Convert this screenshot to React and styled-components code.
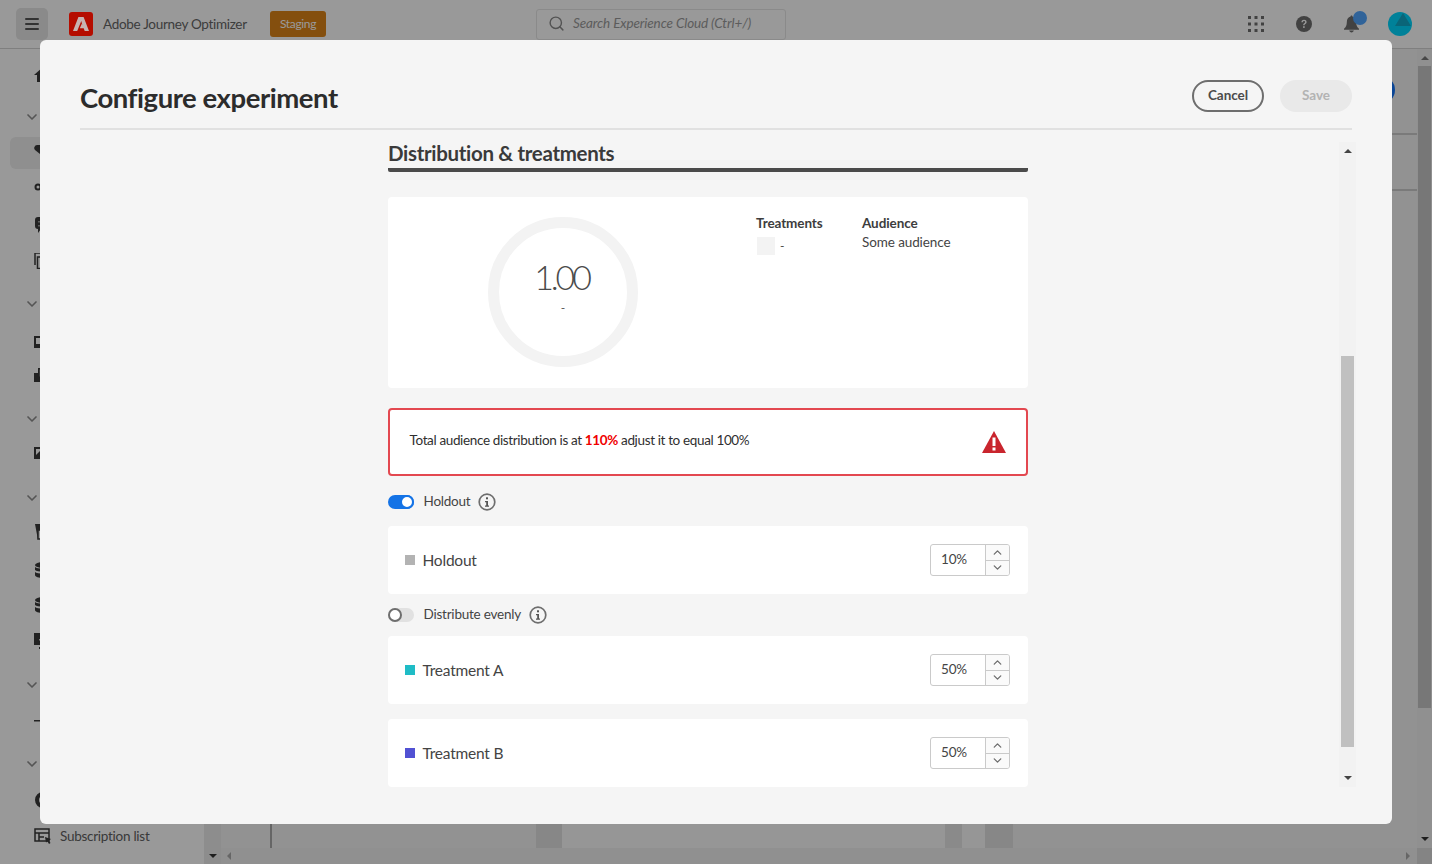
import React from "react";
import styled, { createGlobalStyle } from "styled-components";
import { ChevronDown, ChevronUp, Search } from "lucide-react";

const FONT = `"Lato", "Noto Sans", sans-serif`;

const Global = createGlobalStyle`
  html, body { margin: 0; height: 100%; overflow: hidden; background: #fff; }
  body { font-family: ${FONT}; color: #2c2c2c; }
  * { box-sizing: border-box; }
`;

const Page = styled.div`
  width: 1432px; height: 864px; display: flex; flex-direction: column; overflow: hidden; background: #fff;
`;
const Header = styled.header`
  height: 49px; flex: none; display: flex; align-items: center; border-bottom: 1px solid #d4d4d4; padding-left: 16px;
`;
const MenuBtn = styled.div`
  width: 32px; height: 32px; border-radius: 5px; background: #e6e6e6; display: flex; align-items: center; justify-content: center; margin-right: 21px;
`;
const LogoWrap = styled.div`
  position: relative; z-index: 2; width: 24px; height: 24px; flex: none;
`;
const ProductName = styled.span`
  width: 167px; flex: none; font-size: 13.5px; letter-spacing: -0.3px; color: #666; margin-left: 10px; padding-bottom: 1px; white-space: nowrap;
`;
const Badge = styled.span`
  width: 56px; height: 26px; flex: none; border-radius: 3px; background: #dc8418; color: #fff; font-size: 12px; letter-spacing: -0.35px; padding-bottom: 2px; display: flex; align-items: center; justify-content: center;
`;
const SearchBox = styled.div`
  width: 250px; height: 31px; flex: none; margin-left: 210px; border: 1px solid #e6e6e6; border-radius: 3px; display: flex; align-items: center; gap: 8px; padding-left: 11px; padding-bottom: 2px;
  font-size: 13.5px; letter-spacing: -0.12px; font-style: italic; color: #9a9a9a; white-space: nowrap;
`;
const HeaderTools = styled.div`
  margin-left: auto; display: flex; align-items: center; gap: 31px; padding-right: 20px;
`;
const ToolWrap = styled.div`
  position: relative; width: 17px; height: 24px; display: flex; align-items: center; justify-content: center;
`;
const AvatarWrap = styled.div`
  margin-left: -3px; width: 24px; height: 24px;
`;
const Dot = styled.span`
  position: absolute; top: -1px; right: -7px; width: 14px; height: 14px; border-radius: 50%; background: #50a5ff;
`;

const Body = styled.div`
  flex: 1; display: flex; min-height: 0;
`;
const Sidebar = styled.nav`
  width: 204px; flex: none; padding-top: 10px; display: flex; flex-direction: column; background: #fff;
`;
const SideRow = styled.div`
  height: 32px; flex: none; display: flex; align-items: center; margin-top: ${(p) => p.$mt}px;
  padding-left: ${(p) => (p.$chevron ? 24 : 34)}px; padding-top: ${(p) => (p.$chevron ? 2 : 0)}px; color: ${(p) => (p.$chevron ? "#8e8e8e" : "#3a3a3a")};
  ${(p) => p.$active && `margin-left: 10px; padding-left: 24px; border-radius: 6px 0 0 6px; background: #eeeeee;`}
`;
const SideLabel = styled.span`
  font-size: 13.5px; letter-spacing: -0.27px; margin-left: 8px; color: #616161;
`;
const SideScroll = styled.div`
  width: 17px; flex: none; background: #ececec; display: flex; flex-direction: column; justify-content: flex-end; align-items: center; padding-bottom: 6px;
`;
const Content = styled.main`
  flex: 1; min-width: 0; display: flex; flex-direction: column; background: #f4f4f4;
`;
const ContentTop = styled.div`
  flex: 1; min-height: 0; display: flex;
`;
const Pane = styled.div`
  flex: 1; min-width: 0; display: flex; flex-direction: column; position: relative;
`;
const PaneLine = styled.div`
  height: 2px; background: #ccc; margin-top: ${(p) => p.$mt}px;
`;
const BlueDot = styled.span`
  position: absolute; right: 22px; top: 27px; width: 28px; height: 28px; border-radius: 50%; background: #1273f8;
`;
const BottomStrip = styled.div`
  margin-top: auto; height: 24px; display: flex; padding-left: 49px;
`;
const StripBlock = styled.div`
  width: ${(p) => p.$w}px; height: 100%; margin-left: ${(p) => p.$ml || 0}px; background: ${(p) => p.$bg};
`;
const VScroll = styled.div`
  width: 15px; flex: none; background: #f0f0f0; display: flex; flex-direction: column; align-items: center; position: relative;
`;
const VThumb = styled.div`
  width: 13px; height: 642px; margin-top: 17px; background: #c6c6c6;
`;
const HScroll = styled.div`
  height: 16px; flex: none; background: #f0f0f0; display: flex; align-items: center; padding-left: 6px;
`;
const Corner = styled.div`
  width: 15px; height: 16px; background: #dcdcdc; margin-left: 7px;
`;
const Arrow = styled.span`
  display: block; width: 0; height: 0; flex: none;
  ${(p) => p.$dir === "up" && `border-left: 4px solid transparent; border-right: 4px solid transparent; border-bottom: 4px solid ${p.$c};`}
  ${(p) => p.$dir === "down" && `border-left: 4px solid transparent; border-right: 4px solid transparent; border-top: 4px solid ${p.$c};`}
  ${(p) => p.$dir === "left" && `border-top: 4px solid transparent; border-bottom: 4px solid transparent; border-right: 4px solid ${p.$c};`}
  ${(p) => p.$dir === "right" && `margin-left: auto; border-top: 4px solid transparent; border-bottom: 4px solid transparent; border-left: 4px solid ${p.$c};`}
`;
const ArrowTop = styled.div`
  position: absolute; top: 7px;
`;
const ArrowBottom = styled.div`
  position: absolute; bottom: 7px;
`;

const Overlay = styled.div`
  position: fixed; inset: 0; z-index: 1; background: rgba(0, 0, 0, 0.4); display: flex; align-items: center; justify-content: center;
`;
const Dialog = styled.div`
  width: 1352px; height: 784px; background: #f5f5f5; border-radius: 6px; padding: 40px 40px 36px; display: flex; flex-direction: column;
`;
const DialogHead = styled.div`
  height: 50px; flex: none; display: flex; align-items: flex-start; justify-content: space-between; border-bottom: 2px solid #e1e1e1;
`;
const DialogTitle = styled.h1`
  margin: 0; font-size: 27.5px; letter-spacing: -0.45px; font-weight: 700; line-height: 36px; color: #2c2c2c;
`;
const Actions = styled.div`
  display: flex; gap: 16px;
`;
const PillBtn = styled.div`
  width: 72px; height: 32px; border-radius: 16px; display: flex; align-items: center; justify-content: center; padding-bottom: 3px;
  font-size: 13.5px; letter-spacing: -0.05px; font-weight: 700;
  color: ${(p) => (p.$disabled ? "#b3b3b3" : "#4b4b4b")};
  background: ${(p) => (p.$disabled ? "#e9e9e9" : "transparent")};
  border: ${(p) => (p.$disabled ? "none" : "2px solid #6e6e6e")};
`;
const Scroller = styled.div`
  flex: 1; min-height: 0; display: flex; position: relative; padding-top: 10px;
`;
const Column = styled.div`
  width: 640px; margin-left: 308px; display: flex; flex-direction: column;
`;
const SectionTitle = styled.h2`
  margin: 0; flex: none; font-size: 20.5px; letter-spacing: -0.32px; font-weight: 700; line-height: 26px; color: #3a3a3a;
  border-bottom: 4px solid #4b4b4b; border-radius: 2px; height: 32px;
`;
const SummaryCard = styled.section`
  height: 191px; margin-top: 25px; background: #fff; border-radius: 4px; display: flex; padding: 17px 0 0 100px; flex: none;
`;
const Ring = styled.div`
  width: 150px; height: 150px; margin-top: 3px; border-radius: 50%; border: 11px solid #f3f3f3; display: flex; flex-direction: column; align-items: center; flex: none;
`;
const RingValue = styled.div`
  font-size: 34px; letter-spacing: -3.1px; font-weight: 300; line-height: 38px; margin-top: 30px; margin-right: 3px; color: #4b4b4b;
`;
const RingSub = styled.div`
  font-size: 12px; line-height: 16px; margin-top: 4px; color: #555;
`;
const Legend = styled.div`
  margin-left: 118px; display: flex;
`;
const LegendCol = styled.div`
  width: ${(p) => p.$w}px; display: flex; flex-direction: column; font-size: 13.5px; letter-spacing: -0.1px; line-height: 18px; color: #444;
`;
const LegendHead = styled.div`
  font-weight: 700; color: #3d3d3d;
`;
const LegendItem = styled.div`
  display: flex; align-items: center; gap: 5px; margin-top: 5px; margin-left: 1px; font-size: 12px;
`;
const LegendValue = styled.div`
  margin-top: 1px;
`;
const Swatch = styled.span`
  width: ${(p) => p.$s}px; height: ${(p) => p.$s}px; flex: none; background: ${(p) => p.$c};
`;
const ErrorBox = styled.div`
  height: 68px; margin-top: 20px; flex: none; background: #fff; border: 2px solid #e34850; border-radius: 4px; display: flex; align-items: center; justify-content: space-between;
  padding: 0 20px 0 19.5px; font-size: 13.5px; letter-spacing: -0.36px; color: #2f2f2f;
`;
const ErrorText = styled.span`
  margin-top: -4px;
`;
const Hot = styled.b`
  color: #f00000; font-weight: 700;
`;
const ToggleRow = styled.div`
  height: 20px; margin-top: ${(p) => p.$mt}px; flex: none; display: flex; align-items: center; font-size: 13.5px; letter-spacing: -0.22px; color: #444;
`;
const ToggleText = styled.span`
  margin-bottom: 2px;
`;
const Toggle = styled.span`
  width: 26px; height: 14px; border-radius: 7px; position: relative; flex: none; margin-right: 9.5px;
  background: ${(p) => (p.$on ? "#1473e6" : "#e1e1e1")};
  &::after {
    content: ""; box-sizing: border-box; position: absolute; top: 0; width: 14px; height: 14px; border-radius: 50%; background: #fff;
    border: 2px solid ${(p) => (p.$on ? "#1473e6" : "#6e6e6e")};
    ${(p) => (p.$on ? "right: 0;" : "left: 0;")}
  }
`;
const RowCard = styled.div`
  height: 68px; margin-top: ${(p) => p.$mt}px; flex: none; background: #fff; border-radius: 4px; display: flex; align-items: center; padding: 0 18px 0 17px;
`;
const RowLabel = styled.span`
  font-size: 15.5px; letter-spacing: -0.22px; margin-left: 7.5px; color: #444;
`;
const Stepper = styled.div`
  margin-left: auto; width: 80px; height: 32px; border: 1px solid #cacaca; border-radius: 3px; display: flex; overflow: hidden; background: #fff;
`;
const StepValue = styled.div`
  flex: 1; font-size: 13.5px; letter-spacing: -0.2px; padding-left: 10px; line-height: 28px; color: #444;
`;
const StepBtns = styled.div`
  width: 24px; border-left: 1px solid #cacaca; display: flex; flex-direction: column; background: #fafafa;
`;
const StepBtn = styled.div`
  flex: 1; display: flex; align-items: center; justify-content: center; color: #6e6e6e;
  & + & { border-top: 1px solid #cacaca; }
`;
const DScroll = styled.div`
  position: absolute; right: -4px; top: 12px; width: 17px; height: 645px; background: #f2f2f2; display: flex; flex-direction: column; align-items: center;
`;
const DThumb = styled.div`
  position: absolute; left: 2px; right: 2px; top: 214px; height: 391px; background: #c0c0c0;
`;

const LogoMark = () => (
  <svg width="24" height="24" viewBox="0 0 24 24" style={{ display: "block" }}>
    <rect width="24" height="24" rx="3" fill="#b50d00" />
    <path d="M9.4 5h5.2L20 19h-4.3l-1-2.8h-3.9l2-4.4 1 2.9h-.1L12.3 9 8.200 19H4z" fill="#c7b3b1" />
  </svg>
);
const Hamburger = () => (
  <svg width="14" height="12" viewBox="0 0 14 12" fill="#555">
    <rect width="14" height="2" rx="1" /><rect y="5" width="14" height="2" rx="1" /><rect y="10" width="14" height="2" rx="1" />
  </svg>
);
const Apps = () => (
  <svg width="16" height="16" viewBox="0 0 16 16" fill="#6f6f6f">
    {[0, 6.5, 13].flatMap((x) => [0, 6.5, 13].map((y) => <rect key={`${x}-${y}`} x={x} y={y} width="3" height="3" />))}
  </svg>
);
const Help = () => (
  <svg width="16" height="16" viewBox="0 0 16 16">
    <circle cx="8" cy="8" r="8" fill="#6f6f6f" />
    <path d="M5.400 6.200C5.500 4.600 6.600 3.800 8 3.800c1.500 0 2.600.9 2.600 2.200 0 1.100-.6 1.600-1.300 2.100-.5.4-.7.6-.7 1.200H7.200c0-1 .3-1.500 1-2 .6-.4.9-.7.9-1.200 0-.6-.5-1-1.100-1-.7 0-1.100.4-1.200 1.100z" fill="#fff" />
    <rect x="7.100" y="10.200" width="1.600" height="1.700" fill="#fff" />
  </svg>
);
const Bell = () => (
  <svg width="15" height="18" viewBox="0 0 16 18" fill="#6f6f6f">
    <path d="M8 0c.7 0 1 .5 1 1.100C11.600 1.700 13 4 13 7c0 3 .9 5 3 7v1H0v-1c2.100-2 3-4 3-7 0-3 1.400-5.300 4-5.900C7 .5 7.300 0 8 0z" />
    <path d="M5.500 16h5c-.4 1.200-1.300 2-2.500 2s-2.100-.8-2.500-2z" />
  </svg>
);
const Avatar = () => (
  <svg width="24" height="24" viewBox="0 0 24 24" style={{ display: "block" }}>
    <circle cx="12" cy="12" r="12" fill="#00d8ff" />
    <path d="M15 1l8 13H7z" fill="#11a8c8" />
  </svg>
);
const WarningIcon = () => (
  <svg width="24" height="22" viewBox="0 0 24 22">
    <path d="M12 0L24 22H0z" fill="#c9252d" />
    <rect x="10.500" y="6.500" width="3" height="8.500" fill="#fff" />
    <rect x="10.500" y="16.500" width="3" height="3" fill="#fff" />
  </svg>
);
const InfoMark = () => (
  <svg width="18" height="18" viewBox="0 0 18 18" style={{ marginLeft: 8, flex: "none" }}>
    <circle cx="9" cy="9" r="7.800" fill="none" stroke="#6e6e6e" strokeWidth="1.700" />
    <rect x="8" y="4.300" width="2" height="2" fill="#555" />
    <path d="M7 8h3v4.500h1v1.200H7v-1.200h1.200V9.200H7z" fill="#555" />
  </svg>
);

const Glyph = ({ h = 18, children }) => (
  <svg width="18" height={h} viewBox={`0 0 18 ${h}`} fill="#3a3a3a" style={{ display: "block", flex: "none" }}>{children}</svg>
);
const HomeIcon = () => <Glyph><path d="M9 1l9 8h-3v7H3V9H0z" /></Glyph>;
const FunnelIcon = () => <Glyph h={16}><path d="M3 0h12a3 3 0 0 1 3 3v1l-5 5v7l-7-2V9L1 5a3 3 0 0 1 2-5z" /></Glyph>;
const RingIcon = () => <Glyph><circle cx="4" cy="9" r="2.500" fill="none" stroke="#3a3a3a" strokeWidth="2" /></Glyph>;
const ChatIcon = () => (
  <Glyph h={16}>
    <path d="M4 0h14v12H7l-3 4v-4a3 3 0 0 1-3-3V3a3 3 0 0 1 3-3z" />
    <path d="M4 4h12v1.500H4zM4 8h12v1.500H4z" fill="#999" />
  </Glyph>
);
const CopyIcon = () => (
  <Glyph h={16}>
    <path d="M1 12V0h13" fill="none" stroke="#3a3a3a" strokeWidth="1.500" />
    <rect x="3.500" y="4" width="14" height="11.500" fill="none" stroke="#3a3a3a" strokeWidth="1.500" />
  </Glyph>
);
const PicIcon = () => (
  <Glyph h={12}>
    <rect x="1" y="1" width="16" height="10" fill="none" stroke="#3a3a3a" strokeWidth="2" />
    <path d="M1 11V8h7l3-3 6 6z" />
  </Glyph>
);
const ExportIcon = () => (
  <Glyph h={14}>
    <path d="M0 5h4v-5h14v10H8v4H0z" />
    <rect x="5.500" y="1.500" width="10" height="7" fill="#999" />
  </Glyph>
);
const PicFillIcon = () => (
  <Glyph h={12}>
    <rect x="1" y="1" width="16" height="10" fill="none" stroke="#3a3a3a" strokeWidth="2" />
    <path d="M1 11V9l5-5 7 7z" />
  </Glyph>
);
const TreeIcon = () => (
  <Glyph h={16}>
    <path d="M1 0h8v6H4v10" fill="#3a3a3a" />
    <rect x="4" y="6" width="12" height="9" fill="none" stroke="#3a3a3a" strokeWidth="1.500" />
  </Glyph>
);
const DbIcon = () => (
  <Glyph h={16}>
    <ellipse cx="9" cy="3" rx="8" ry="3" />
    <path d="M1 5c2 2 14 2 16 0v3c-2 2-14 2-16 0zM1 10c2 2 14 2 16 0v3c0 2-4 3-8 3s-8-1-8-3z" />
  </Glyph>
);
const BoxIcon = () => (
  <Glyph h={16}>
    <path d="M0 0h14v12H0z" />
    <path d="M5 6h8v1.500H5z" fill="#ddd" />
    <path d="M5 14h3v2H5z" />
  </Glyph>
);
const DashIcon = () => (
  <Glyph><path d="M0 8h18v1.500H0z" /><path d="M6 1h1v5H6zM6 11h1v5H6z" fill="#ccc" /></Glyph>
);
const ArcIcon = () => (
  <Glyph h={16}><path d="M9 0a8 8 0 1 0 0 16v-4a4 4 0 1 1 0-8z" /></Glyph>
);
const ListIcon = () => (
  <svg width="18" height="16" viewBox="0 0 18 16" fill="none" stroke="#3a3a3a" strokeWidth="1.500" style={{ flex: "none" }}>
    <rect x="1" y="1" width="14" height="12" />
    <path d="M1 5h14M5 5v8M5 9h5" />
    <path d="M11 9l6 2-2 1.500 1.500 2.500-1.500 1-1.500-2.500-1.500 1z" fill="#3a3a3a" stroke="none" />
  </svg>
);

const sideRows = [
  { mt: 0, icon: <HomeIcon /> },
  { mt: 9, chevron: true },
  { mt: 5, active: true, icon: <FunnelIcon /> },
  { mt: 2, icon: <RingIcon /> },
  { mt: 6, icon: <ChatIcon /> },
  { mt: 4, icon: <CopyIcon /> },
  { mt: 10, chevron: true },
  { mt: 7, icon: <PicIcon /> },
  { mt: 1, icon: <ExportIcon /> },
  { mt: 11, chevron: true },
  { mt: 3, icon: <PicFillIcon /> },
  { mt: 12, chevron: true },
  { mt: 3, icon: <TreeIcon /> },
  { mt: 6, icon: <DbIcon /> },
  { mt: 3, icon: <DbIcon /> },
  { mt: 4, icon: <BoxIcon /> },
  { mt: 11, chevron: true },
  { mt: 5, icon: <DashIcon /> },
  { mt: 10, chevron: true },
  { mt: 5, icon: <ArcIcon /> },
  { mt: 4, icon: <ListIcon />, label: "Subscription list" },
];

const StepperField = ({ value }) => (
  <Stepper>
    <StepValue>{value}</StepValue>
    <StepBtns>
      <StepBtn><ChevronUp size={13} strokeWidth={2.5} /></StepBtn>
      <StepBtn><ChevronDown size={13} strokeWidth={2.5} /></StepBtn>
    </StepBtns>
  </Stepper>
);

export default function App() {
  return (
    <Page>
      <Global />
      <Header>
        <MenuBtn><Hamburger /></MenuBtn>
        <LogoWrap><LogoMark /></LogoWrap>
        <ProductName>Adobe Journey Optimizer</ProductName>
        <Badge>Staging</Badge>
        <SearchBox><Search size={17} color="#8a8a8a" />Search Experience Cloud (Ctrl+/)</SearchBox>
        <HeaderTools>
          <ToolWrap><Apps /></ToolWrap>
          <ToolWrap><Help /></ToolWrap>
          <ToolWrap><Bell /><Dot /></ToolWrap>
          <AvatarWrap><Avatar /></AvatarWrap>
        </HeaderTools>
      </Header>
      <Body>
        <Sidebar>
          {sideRows.map((r, i) => (
            <SideRow key={i} $mt={r.mt} $chevron={r.chevron} $active={r.active}>
              {r.chevron ? <ChevronDown size={16} strokeWidth={2.5} /> : r.icon}
              {r.label && <SideLabel>{r.label}</SideLabel>}
            </SideRow>
          ))}
        </Sidebar>
        <SideScroll><Arrow $dir="down" $c="#333" /></SideScroll>
        <Content>
          <ContentTop>
            <Pane>
              <BlueDot />
              <PaneLine $mt={84} />
              <PaneLine $mt={54} />
              <BottomStrip>
                <StripBlock $w={2} $bg="#aaa" />
                <StripBlock $w={26} $ml={264} $bg="#e2e2e2" />
                <StripBlock $w={383} $bg="#fafafa" />
                <StripBlock $w={17} $bg="#e6e6e6" />
                <StripBlock $w={23} $bg="#fafafa" />
                <StripBlock $w={28} $bg="#e2e2e2" />
              </BottomStrip>
            </Pane>
            <VScroll>
              <ArrowTop><Arrow $dir="up" $c="#777" /></ArrowTop>
              <VThumb />
              <ArrowBottom><Arrow $dir="down" $c="#333" /></ArrowBottom>
            </VScroll>
          </ContentTop>
          <HScroll>
            <Arrow $dir="left" $c="#aaa" />
            <Arrow $dir="right" $c="#aaa" />
            <Corner />
          </HScroll>
        </Content>
      </Body>
      <Overlay>
        <Dialog>
          <DialogHead>
            <DialogTitle>Configure experiment</DialogTitle>
            <Actions>
              <PillBtn>Cancel</PillBtn>
              <PillBtn $disabled>Save</PillBtn>
            </Actions>
          </DialogHead>
          <Scroller>
            <Column>
              <SectionTitle>Distribution &amp; treatments</SectionTitle>
              <SummaryCard>
                <Ring>
                  <RingValue>1.00</RingValue>
                  <RingSub>-</RingSub>
                </Ring>
                <Legend>
                  <LegendCol $w={106}>
                    <LegendHead>Treatments</LegendHead>
                    <LegendItem><Swatch $s={18} $c="#f3f3f3" />-</LegendItem>
                  </LegendCol>
                  <LegendCol $w={120}>
                    <LegendHead>Audience</LegendHead>
                    <LegendValue>Some audience</LegendValue>
                  </LegendCol>
                </Legend>
              </SummaryCard>
              <ErrorBox>
                <ErrorText>Total audience distribution is at <Hot>110%</Hot> adjust it to equal 100%</ErrorText>
                <WarningIcon />
              </ErrorBox>
              <ToggleRow $mt={16}>
                <Toggle $on /><ToggleText>Holdout</ToggleText><InfoMark />
              </ToggleRow>
              <RowCard $mt={14}>
                <Swatch $s={10} $c="#b3b3b3" />
                <RowLabel>Holdout</RowLabel>
                <StepperField value="10%" />
              </RowCard>
              <ToggleRow $mt={11}>
                <Toggle /><ToggleText>Distribute evenly</ToggleText><InfoMark />
              </ToggleRow>
              <RowCard $mt={11}>
                <Swatch $s={10} $c="#1fbcc6" />
                <RowLabel>Treatment A</RowLabel>
                <StepperField value="50%" />
              </RowCard>
              <RowCard $mt={15}>
                <Swatch $s={10} $c="#5151d3" />
                <RowLabel>Treatment B</RowLabel>
                <StepperField value="50%" />
              </RowCard>
            </Column>
            <DScroll>
              <ArrowTop><Arrow $dir="up" $c="#444" /></ArrowTop>
              <DThumb />
              <ArrowBottom><Arrow $dir="down" $c="#444" /></ArrowBottom>
            </DScroll>
          </Scroller>
        </Dialog>
      </Overlay>
    </Page>
  );
}
